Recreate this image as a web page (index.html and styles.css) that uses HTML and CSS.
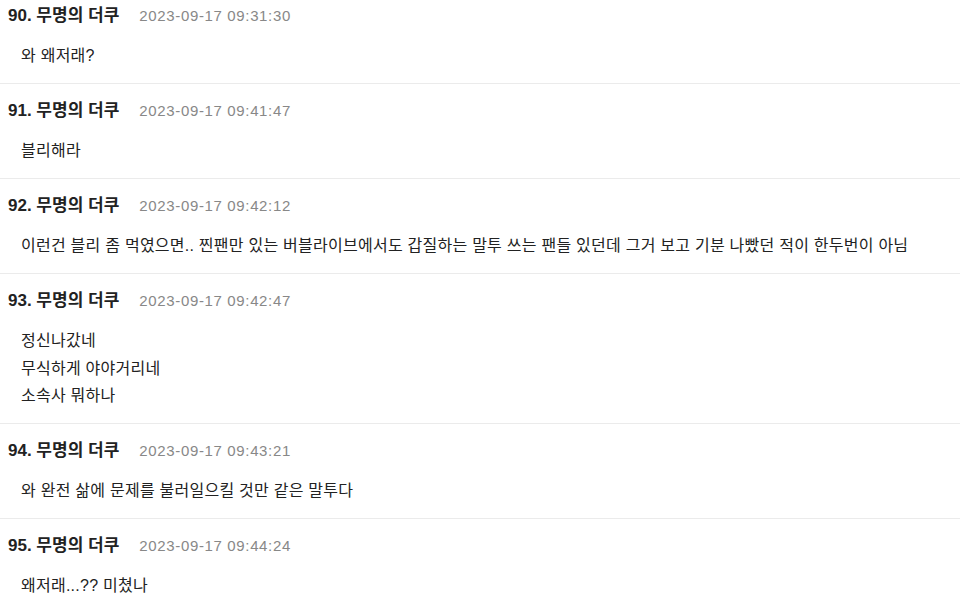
FILE: index.html
```html
<!DOCTYPE html>
<html lang="ko">
<head>
<meta charset="utf-8">
<link rel="stylesheet" href="styles.css">
</head>
<body>
<div class="list">
  <div class="item">
    <div class="head"><span class="name">90. 무명의 더쿠</span><span class="date">2023-09-17 09:31:30</span></div>
    <div class="body">와 왜저래?</div>
  </div>
  <div class="item">
    <div class="head"><span class="name">91. 무명의 더쿠</span><span class="date">2023-09-17 09:41:47</span></div>
    <div class="body">블리해라</div>
  </div>
  <div class="item">
    <div class="head"><span class="name">92. 무명의 더쿠</span><span class="date">2023-09-17 09:42:12</span></div>
    <div class="body">이런건 블리 좀 먹였으면.. 찐팬만 있는 버블라이브에서도 갑질하는 말투 쓰는 팬들 있던데 그거 보고 기분 나빴던 적이 한두번이 아님</div>
  </div>
  <div class="item">
    <div class="head"><span class="name">93. 무명의 더쿠</span><span class="date">2023-09-17 09:42:47</span></div>
    <div class="body">정신나갔네<br>무식하게 야야거리네<br>소속사 뭐하나</div>
  </div>
  <div class="item">
    <div class="head"><span class="name">94. 무명의 더쿠</span><span class="date">2023-09-17 09:43:21</span></div>
    <div class="body">와 완전 삶에 문제를 불러일으킬 것만 같은 말투다</div>
  </div>
  <div class="item">
    <div class="head"><span class="name">95. 무명의 더쿠</span><span class="date">2023-09-17 09:44:24</span></div>
    <div class="body">왜저래...?? 미쳤나</div>
  </div>
</div>
</body>
</html>
```
FILE: styles.css
```css
html, body {
  margin: 0;
  padding: 0;
  background: #fff;
  overflow: hidden;
}
body {
  font-family: "Liberation Sans", "Noto Sans CJK KR", sans-serif;
  color: #222;
}
.list {
  margin-top: -10px;
}
.item {
  border-bottom: 1px solid #ebebeb;
  padding: 16px 0 13.5px;
}
.item:first-child {
  padding-top: 15px;
}
.head {
  display: flex;
  align-items: baseline;
  gap: 20px;
  padding-left: 8px;
  height: 22px;
  line-height: 22px;
}
.name {
  font-size: 17px;
  font-weight: 700;
  color: #222;
}
.date {
  font-size: 15px;
  letter-spacing: 0.65px;
  color: #888;
}
.body {
  margin-top: 15px;
  padding-left: 21px;
  font-size: 16px;
  letter-spacing: 0.25px;
  line-height: 27.5px;
  color: #222;
}
```
